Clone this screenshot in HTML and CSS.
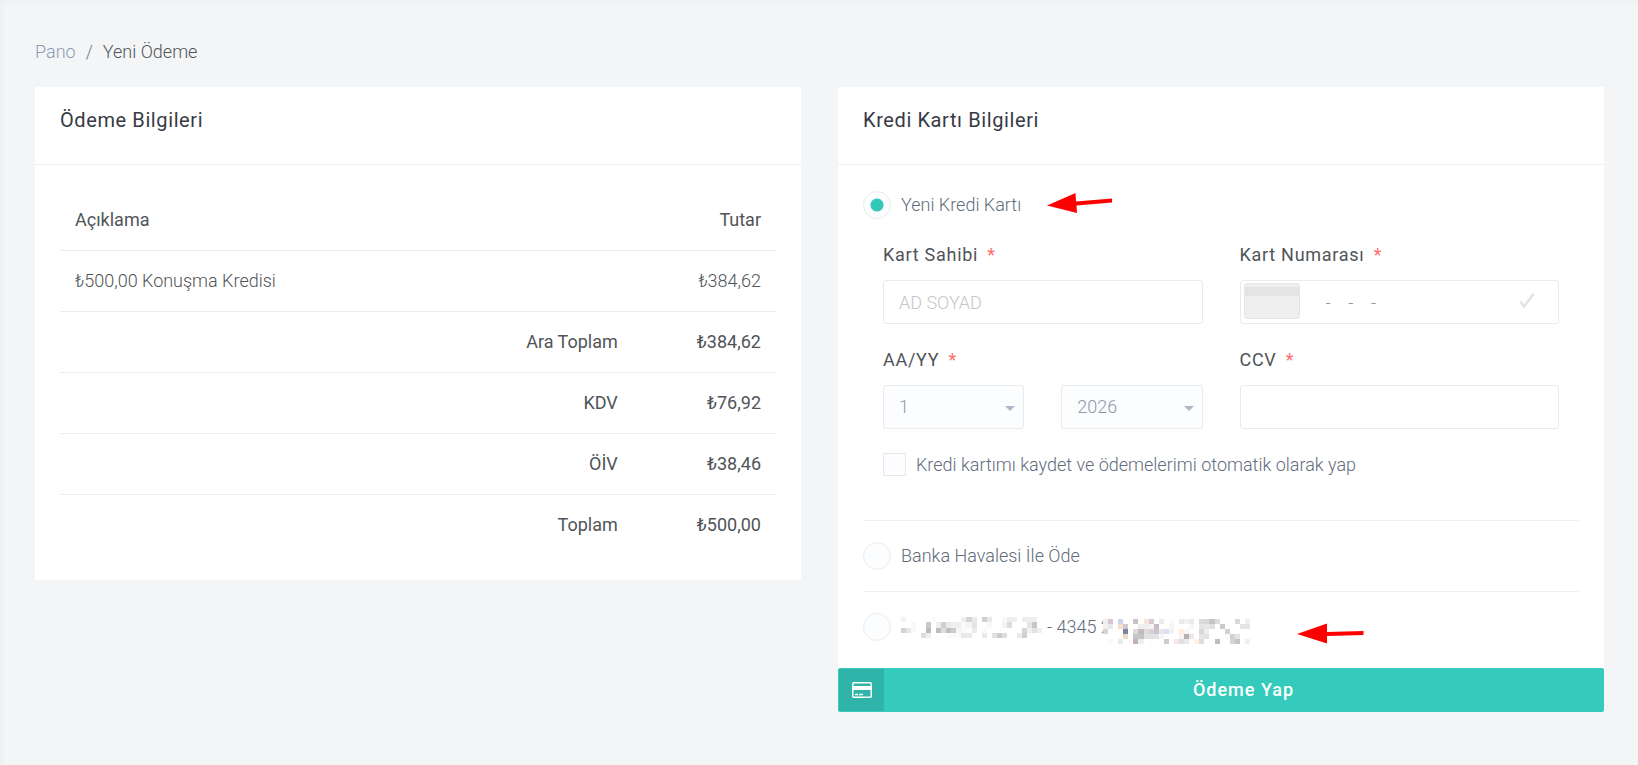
FILE: index.html
```html
<!DOCTYPE html>
<html lang="tr">

<head>
  <meta charset="UTF-8" />
  <meta name="viewport" content="width=device-width, initial-scale=1.0" />
  <title>Yeni Ödeme</title>
  <link rel="stylesheet" href="styles.css">
</head>

<body>

  <nav class="breadcrumb">
    <a href="#">Pano</a>
    <span class="separator">/</span>
    <span>Yeni Ödeme</span>
  </nav>

  <main class="columns">

    <section class="card">
      <h2 class="card-title">Ödeme Bilgileri</h2>
      <div class="card-body">
        <table class="summary">
          <thead>
            <tr>
              <th class="desc">Açıklama</th>
              <th></th>
              <th class="amount">Tutar</th>
            </tr>
          </thead>
          <tbody>
            <tr>
              <td class="desc" colspan="2">₺500,00 Konuşma Kredisi</td>
              <td>₺384,62</td>
            </tr>
            <tr>
              <th colspan="2">Ara Toplam</th>
              <th>₺384,62</th>
            </tr>
            <tr>
              <th colspan="2">KDV</th>
              <th>₺76,92</th>
            </tr>
            <tr>
              <th colspan="2">ÖİV</th>
              <th>₺38,46</th>
            </tr>
            <tr>
              <th colspan="2">Toplam</th>
              <th>₺500,00</th>
            </tr>
          </tbody>
        </table>
      </div>
    </section>

    <form class="payment">
      <div class="card">
        <h2 class="card-title">Kredi Kartı Bilgileri</h2>
        <div class="card-body methods">

          <div class="option">
            <input type="radio" id="newCard" name="method" checked />
            <label for="newCard">Yeni Kredi Kartı</label>
            <svg class="arrow" width="68" height="28" viewBox="0 0 68 28">
              <path d="M1 14.500L29.500 2L30 10.500L66 7.500V11.500L30.500 14.500L31 22Z" />
            </svg>
          </div>

          <div class="fields">
            <div class="field">
              <label for="owner">Kart Sahibi <span class="required">*</span></label>
              <input id="owner" class="control" type="text" placeholder="AD SOYAD" />
            </div>
            <div class="field">
              <label for="number">Kart Numarası <span class="required">*</span></label>
              <div class="number-box">
                <input id="number" class="control" type="text" value="-    -    -" />
                <span class="card-chip"></span>
                <svg class="check" width="16" height="18" viewBox="0 0 16 18">
                  <path d="M1.500 9.500L5 14.500L14.500 2" />
                </svg>
              </div>
            </div>
            <div class="field">
              <label for="month">AA/YY <span class="required">*</span></label>
              <div class="expiry">
                <select id="month" class="control">
                  <option>1</option>
                  <option>2</option>
                  <option>3</option>
                </select>
                <select id="year" class="control" aria-label="YY">
                  <option>2026</option>
                  <option>2027</option>
                  <option>2028</option>
                </select>
              </div>
            </div>
            <div class="field">
              <label for="ccv">CCV <span class="required">*</span></label>
              <input id="ccv" class="control" type="text" />
            </div>
            <div class="save">
              <input type="checkbox" id="save" />
              <label for="save">Kredi kartımı kaydet ve ödemelerimi otomatik olarak yap</label>
            </div>
          </div>

          <div class="option bordered">
            <input type="radio" id="transfer" name="method" />
            <label for="transfer">Banka Havalesi İle Öde</label>
          </div>

          <div class="option bordered">
            <input type="radio" id="savedCard" name="method" />
            <label for="savedCard" class="saved">
              <svg class="mask" id="maskName" width="141" height="21" viewBox="0 0 28 4" preserveAspectRatio="none"></svg>
              <span>- 4345 2</span>
              <svg class="mask mask-end" id="maskBank" width="147" height="25" viewBox="0 0 29 5" preserveAspectRatio="none"></svg>
            </label>
            <svg class="arrow arrow-far" width="68" height="28" viewBox="0 0 68 28">
              <path d="M0 21L30 10.500V19L66.500 18V22L30 23V30.500Z" />
            </svg>
          </div>

        </div>
      </div>

      <button type="button" class="pay">
        <span class="pay-icon">
          <svg width="20" height="16" viewBox="0 0 20 16">
            <rect x="0.750" y="0.750" width="18.500" height="14.500" rx="1" fill="none" stroke="#fff" stroke-width="1.500" />
            <rect x="1" y="4" width="18" height="4" fill="#fff" />
            <path d="M3 12.500H6M7 12.500H11" stroke="#fff" stroke-width="1.500" />
          </svg>
        </span>
        <span class="pay-text">Ödeme Yap</span>
      </button>
    </form>

  </main>

  <script>
    // every row is a list of cells, "." is an empty one
    const maskName = [
      "f3 . . . . . fb . . . . . ef d4 e9 . d0 e8 . . f8 ef ef . ec ee ee .",
      ". . f9 . . c9 . ef cf ea ef ee fa f4 e4 . . f8 . . f3 dc . . . e6 c6 .",
      "d4 e6 f9 . . b9 . bd de c0 cc f6 fa fd eb . fa . . . . . . . d5 f0 e2 f0",
      ". . . . dc ee . . . fa fa fa ea ea . . ea . e2 cd de . . ec d0 . . ."
    ];
    const maskBank = [
      "f0 d9c4d4 . ccd3ee . . c4 . f9e3d6 d7c7d7 . ec . fa . eb f3 eb . e0dad6 d8 c4 dd . . . da . ee",
      "f0 e8 . f5e0d0 cc . . ee ee f4 c9b9c9 . . f4 . . . f7 . e6 e8 e0 . cc . . . e4 e4",
      "d4 . . . 80809f . dd c4b9c4 dd d8d0d8 ccc4cc e8 dbdff3 f3 . fdeee0 f7 . . d8 ee . . . d0d2d6 . . . .",
      ". . . . f0dcc6 . c6 c4 e2 e2 e4 f6 . . . f4 b8b0b0 e8 . e4 e2 . . . fa d2 e4 . .",
      ". fa . ea . . c4b0b4 ee . fc . . cc . f5e4ec e0 e8 . fdf3e0 dd . . c4bcb8 . . d4 c4 . f0"
    ];

    function drawMask(id, rows) {
      let cells = "";
      rows.forEach((row, y) => {
        row.split(" ").forEach((c, x) => {
          if (c === ".") return;
          const color = c.length === 2 ? c + c + c : c;
          cells += `<rect x="${x}" y="${y}" width="1" height="1" fill="#${color}" />`;
        });
      });
      document.getElementById(id).innerHTML = cells;
    }

    drawMask("maskName", maskName);
    drawMask("maskBank", maskBank);
  </script>

</body>

</html>
```
FILE: styles.css
```css
* {
  box-sizing: border-box;
}
body {
  margin: 0;
  min-height: 100vh;
  padding: 40px 34px 40px 35px;
  background-color: #f4f5f7;
  box-shadow: inset 2px 2px 4px rgba(0, 0, 0, 0.03);
  color: #505458;
  font-family: Roboto, "Liberation Sans", sans-serif;
  font-size: 18px;
  font-weight: 300;
  line-height: 24px;
}

.breadcrumb {
  display: flex;
  gap: 10px;
  margin-bottom: 23px;
}
.breadcrumb a {
  color: #8e9aaf;
  text-decoration: none;
}
.separator {
  color: #73777b;
}

.columns {
  display: grid;
  grid-template-columns: 1fr 1fr;
  gap: 37px;
  align-items: start;
}
.card {
  background-color: #fff;
}
.card-title {
  margin: 0;
  padding: 21px 25px 32px;
  border-bottom: 1px solid #f0f1f2;
  color: #373a45;
  font-size: 20px;
  font-weight: 400;
  letter-spacing: 0.03em;
}
.card-body {
  padding: 25px;
}
.card-body.methods {
  padding-top: 26px;
}

.summary {
  width: 100%;
  border-collapse: collapse;
}
.summary th,
.summary td {
  padding: 18px 15px;
  text-align: right;
}
.summary th {
  font-weight: 400;
}
.summary .desc {
  text-align: left;
}
.summary .amount {
  width: 20%;
}
.summary tbody tr {
  border-top: 1px solid #eaebec;
}

.option {
  display: flex;
  align-items: center;
  gap: 10px;
  color: #626c7c;
}
.option.bordered {
  padding: 21px 0;
  border-top: 1px solid #f0f1f2;
}
.option.bordered:last-child {
  padding-bottom: 2px;
}
.option input {
  appearance: none;
  width: 28px;
  height: 28px;
  margin: 0;
  border: 1px solid #ebecee;
  border-radius: 50%;
  background-color: #fcfdff;
}
.option input:checked {
  background-image: radial-gradient(circle, #34c8bb 6px, transparent 7px);
}
.arrow {
  margin-left: 15px;
  fill: #f00;
  overflow: visible;
}
.arrow-far {
  margin-left: 37px;
}

.fields {
  display: grid;
  grid-template-columns: 1fr 1fr;
  gap: 24px 37px;
  padding: 24px 20px 44px;
}
.field label {
  display: block;
  margin-bottom: 13px;
  letter-spacing: 0.04em;
  font-weight: 400;
}
.required {
  margin-left: 4px;
  color: #ff6c6c;
}
.control {
  display: block;
  width: 100%;
  height: 44px;
  padding: 0 15px;
  border: 1px solid #e9eaeb;
  border-radius: 3px;
  background-color: #fff;
  color: #8e98a8;
  font: inherit;
}
.control::placeholder {
  color: #c3c6ca;
}
select.control {
  appearance: none;
  background: #fcfdff url("data:image/svg+xml,%3Csvg xmlns='http://www.w3.org/2000/svg' width='10' height='5'%3E%3Cpath d='M0 0h10L5 5z' fill='%23aeb8c8'/%3E%3C/svg%3E") no-repeat right 8px top 20px;
}
.expiry {
  display: grid;
  grid-template-columns: 1fr 1fr;
  gap: 37px;
}
.number-box {
  position: relative;
}
.number-box .control {
  padding-left: 85px;
}
.card-chip {
  position: absolute;
  top: 3px;
  left: 4px;
  width: 56px;
  height: 36px;
  border: 1px solid #e5e5e5;
  border-radius: 3px;
  background: linear-gradient(#efefef 3px, #e4e4e4 3px, #e4e4e4 12px, #efefef 12px);
}
.check {
  position: absolute;
  top: 12px;
  right: 24px;
  fill: none;
  stroke: #e2e2e2;
  stroke-width: 2.5;
}
.save {
  grid-column: 1 / -1;
  display: flex;
  align-items: center;
  gap: 10px;
  height: 23px;
  color: #626c7c;
}
.save input {
  appearance: none;
  width: 23px;
  height: 23px;
  margin: 0;
  border: 1px solid #e6e7e9;
  background-color: #fcfdff;
}

.saved {
  display: flex;
  align-items: center;
  gap: 5px;
}
.mask {
  shape-rendering: crispEdges;
}
/* covers the digits after the first four */
.mask-end {
  margin: 6px 0 -3px -13px;
  background-color: #fff;
}

.pay {
  display: flex;
  align-items: stretch;
  width: 100%;
  height: 44px;
  padding: 0;
  border: 1px solid #34cbbd;
  border-radius: 2px;
  background-color: #34cbbd;
  color: #fff;
  font: inherit;
  font-weight: 500;
  letter-spacing: 1px;
}
.pay-icon {
  display: flex;
  align-items: center;
  justify-content: center;
  width: 45px;
  background-color: #2eb4a8;
}
.pay-text {
  flex: 1;
  align-self: center;
}
```
